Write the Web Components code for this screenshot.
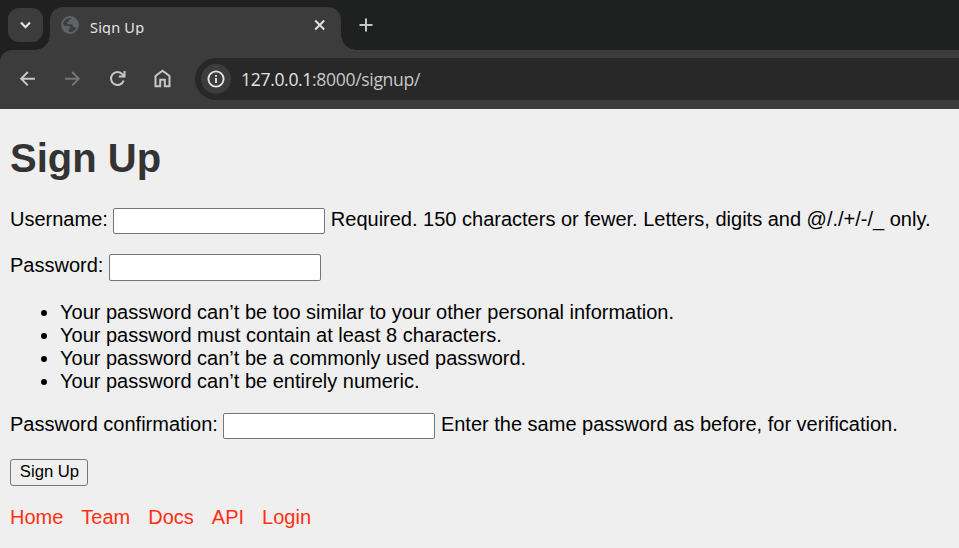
<!DOCTYPE html>
<html lang="en">
<head>
<meta charset="utf-8">
<title>Sign Up</title>
<style>
html,body{margin:0;height:100%;overflow:hidden;background:#efefef}
body{font:20px/23px "Liberation Sans",Arial,sans-serif;color:#000}
</style>
</head>
<body>
<browser-window>
  <tab-strip slot="tabs"><browser-tab>Sign Up</browser-tab></tab-strip>
  <browser-toolbar slot="toolbar"><address-bar host="127.0.0.1" rest=":8000/signup/"></address-bar></browser-toolbar>
  <signup-page></signup-page>
</browser-window>
<script>
function define(name, html) {
  const t = document.createElement('template');
  t.innerHTML = html;
  customElements.define(name, class extends HTMLElement {
    constructor() {
      super();
      this.attachShadow({mode: 'open'}).append(t.content.cloneNode(true));
    }
    connectedCallback() {
      this.shadowRoot.querySelectorAll('[data-attr]').forEach(e => {
        e.textContent = this.getAttribute(e.dataset.attr) || '';
      });
    }
  });
}

define('browser-window', `<style>
:host{display:flex;flex-direction:column;width:100%;height:100vh}
header{background:#1f2120;height:109px;flex:none;display:flex;flex-direction:column}
</style><header><slot name="tabs"></slot><slot name="toolbar"></slot></header><slot></slot>`);

define('tab-strip', `<style>
:host{display:flex;height:50px;flex:none;box-sizing:border-box;padding:8px 0 0 8px;align-items:flex-start}
svg{display:block}
.search{width:35px;height:34px;border-radius:11px;background:#3c3c3c;display:grid;place-items:center;margin-right:7px}
.plus{margin:9px 0 0 17px}
</style>
<div class="search"><svg width="14" height="12" viewBox="0 0 14 12" fill="none" stroke="#e3e3e3" stroke-width="2.2"><path d="M2 3.600 6.500 8.200l4.500-4.600"/></svg></div>
<slot></slot>
<svg class="plus" width="16" height="16" viewBox="0 0 16 16" fill="none" stroke="#c7c7c7" stroke-width="2"><path d="M8 1.500v13M1.500 8h13"/></svg>`);

define('browser-tab', `<style>
:host{display:flex;align-items:flex-start;position:relative;box-sizing:border-box;width:290.500px;height:43px;margin-top:-1px;padding:9px 14.500px 0 11px;background:#3c3c3c;border-radius:13px 13px 0 0;font:15px/20px "Noto Sans","Open Sans",sans-serif;color:#e3e3e3}
:host::before,:host::after{content:"";position:absolute;bottom:0;width:15px;height:15px}
:host::before{left:-15px;background:radial-gradient(circle at 0 0,transparent 14.5px,#3c3c3c 15px)}
:host::after{right:-15px;background:radial-gradient(circle at 100% 0,transparent 14.5px,#3c3c3c 15px)}
svg{display:block;flex:none}
.title{margin:1px auto 0 11px;height:18px;overflow:hidden;font-size:14.500px;letter-spacing:.2px}
</style>
<svg width="18" height="18" viewBox="0 0 18 18"><circle cx="9" cy="9" r="8" fill="none" stroke="#5f6368" stroke-width="1.800"/><path fill="#5f6368" d="M10.500 1 C10.500 3.300 9.500 3.800 7.800 3.800 V5.600 C7.800 6.300 6.500 6.200 6 6.200 V8.300 H10.200 C11.800 8.300 11.800 9.500 11.800 11 H13.300 C14.400 11 14.700 12 15 13 C19 8 17 2 10.500 1Z"/><path fill="#5f6368" d="M1 7.500 L4.500 10 H7.200 C9 10 9.500 11 9.500 12.400 H7.800 V17 C3 16.500 .5 12 1 7.500Z"/></svg>
<span class="title"><slot></slot></span>
<svg style="margin-top:3px" width="12" height="12" viewBox="0 0 12 12" fill="none" stroke="#e3e3e3" stroke-width="1.900"><path d="m1.200 1.500 9 9m0-9-9 9"/></svg>`);

define('browser-toolbar', `<style>
:host{display:flex;flex:1;box-sizing:border-box;align-items:flex-start;padding:8px 0 0 18px;background:#3c3c3c;border-radius:12px 0 0 0}
nav{display:flex;gap:25px;padding-top:11px;margin-right:22px}
svg{display:block;fill:none;stroke:#c7c7c7;stroke-width:2}
</style>
<nav>
<svg width="20" height="20" viewBox="0 0 20 20"><path d="M17 9.700H3.500M9.800 3 3.200 9.700l6.600 6.700"/></svg>
<svg width="20" height="20" viewBox="0 0 20 20" style="stroke:#757575"><path d="M2 9.700h13.500M9.200 3l6.600 6.700-6.600 6.700"/></svg>
<svg width="20" height="20" viewBox="0 0 20 20"><path d="M15.700 11.500A6.500 6.500 0 1 1 14.500 5.300L16 7M16.500 2v5.600h-5.700"/></svg>
<svg width="20" height="20" viewBox="0 0 20 20"><path d="M2.500 17.300V7L9.500 1.700 16.500 7v10.300h-4.700v-6.500H7.200v6.500Z"/></svg>
</nav><slot></slot>`);

define('address-bar', `<style>
:host{display:flex;flex:1;align-items:center;box-sizing:border-box;height:42px;padding-left:6px;border-radius:21px 0 0 21px;background:#282828;font:17.600px/24px "Open Sans","Noto Sans",sans-serif;color:#c7c7c7}
.info{width:30px;height:30px;border-radius:50%;background:#3c3c3c;display:grid;place-items:center;margin-right:10px}
b{font-weight:400;color:#e3e3e3}
.url{letter-spacing:-.35px;white-space:nowrap}
</style>
<span class="info"><svg width="18" height="18" viewBox="0 0 18 18" fill="none" stroke="#e3e3e3" stroke-width="1.900"><circle cx="9" cy="9" r="7.600"/><path d="M9 8v5M9 4.900v1.900"/></svg></span>
<span class="url"><b data-attr="host"></b><span data-attr="rest"></span></span>`);

define('form-field', `<style>
:host{display:flex;align-items:flex-start;gap:5.500px;white-space:nowrap}
input{box-sizing:border-box;width:212px;height:var(--field-height,26px);margin:0;border:1px solid #767676;border-radius:2px;background:#fff;padding:1px 2px;flex:none}
</style><label data-attr="label"></label><input type="text"><span><slot></slot></span>`);

define('page-links', `<style>
:host{display:flex;gap:18px}
a{color:#ff3012;text-decoration:none}
</style><a href="#">Home</a><a href="#">Team</a><a href="#">Docs</a><a href="#">API</a><a href="#">Login</a>`);

define('signup-page', `<style>
:host{display:flex;flex:1;flex-direction:column;gap:20px;padding:26px 10px 0;background:#efefef}
h1{margin:0 0 7px;font-size:40px;line-height:46px;color:#333}
ul{margin:0;padding-left:50px}
button{align-self:flex-start;box-sizing:border-box;width:78px;height:27px;margin:0;padding:0 0 2px 1px;border:1px solid #767676;border-radius:3px;background:#efefef;font:16.667px/20px "Liberation Sans",Arial,sans-serif;color:#000}
</style>
<h1>Sign Up</h1>
<form-field label="Username:">Required. 150 characters or fewer. Letters, digits and @/./+/-/_ only.</form-field>
<form-field label="Password:" style="--field-height:27px"></form-field>
<ul><li>Your password can’t be too similar to your other personal information.</li><li>Your password must contain at least 8 characters.</li><li>Your password can’t be a commonly used password.</li><li>Your password can’t be entirely numeric.</li></ul>
<form-field label="Password confirmation:">Enter the same password as before, for verification.</form-field>
<button type="button">Sign Up</button>
<page-links></page-links>`);
</script>
</body>
</html>
